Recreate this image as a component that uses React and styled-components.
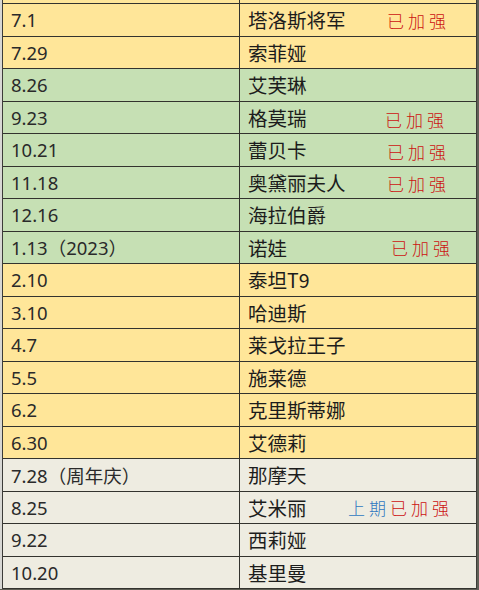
import React from "react";
import styled, { createGlobalStyle } from "styled-components";

const Global = createGlobalStyle`
  html, body { margin: 0; padding: 0; }
  body {
    background: #5f5f55;
    width: 479px;
    height: 590px;
    overflow: hidden;
    font-family: "Noto Sans", "Noto Sans CJK SC", sans-serif;
  }
`;

const Sheet = styled.div`
  width: 475px;
  height: 589px;
  box-sizing: border-box;
  border-left: 1px solid #3c3c38;
  border-right: 1px solid #3c3c38;
  margin-left: 2px;
  background: #eeece1;
  box-shadow: -2px 0 0 #d8d8d4;
`;

const bg = {
  y: "#ffe699",
  g: "#c6e0b4",
  e: "#eeece1",
};

const Stub = styled.div`
  height: 3px;
  background: ${bg.y};
  border-bottom: 1px solid #33332e;
  display: grid;
  grid-template-columns: 237px 1fr;
  & > div:first-child { border-right: 1px solid #33332e; }
`;

const Row = styled.div`
  display: grid;
  grid-template-columns: 237px 1fr;
  height: 32.5px;
  box-sizing: border-box;
  border-bottom: 1px solid #33332e;
  background: ${(p) => bg[p.$tone]};
`;

const DateCell = styled.div`
  display: flex;
  align-items: center;
  padding-left: 8px;
  border-right: 1px solid #33332e;
  font-size: 18.5px;
  font-weight: 400;
  color: #2a2a2a;
  white-space: nowrap;
`;

const NameCell = styled.div`
  position: relative;
  display: flex;
  align-items: center;
  padding-left: 8px;
  font-family: "Noto Sans CJK SC", sans-serif;
  font-size: 19.5px;
  color: #1c1c1c;
  white-space: nowrap;
`;

const Note = styled.span`
  position: absolute;
  left: ${(p) => p.$x}px;
  top: 50%;
  transform: translateY(calc(-50% + ${(p) => p.$dy || 0}px));
  font-family: "Noto Sans CJK SC", sans-serif;
  font-weight: 300;
  font-size: 17px;
  letter-spacing: 4px;
  white-space: nowrap;
`;

const Red = styled.span`
  color: #cc1111;
`;

const Blue = styled.span`
  color: #2f78c0;
`;

const rows = [
  ["7.1", "塔洛斯将军", "y", { x: 147 }],
  ["7.29", "索菲娅", "y"],
  ["8.26", "艾芙琳", "g"],
  ["9.23", "格莫瑞", "g", { x: 145, dy: 2 }],
  ["10.21", "蕾贝卡", "g", { x: 147, dy: 1 }],
  ["11.18", "奥黛丽夫人", "g", { x: 147, dy: 1 }],
  ["12.16", "海拉伯爵", "g"],
  ["1.13（2023）", "诺娃", "g", { x: 151 }],
  ["2.10", "泰坦T9", "y"],
  ["3.10", "哈迪斯", "y"],
  ["4.7", "莱戈拉王子", "y"],
  ["5.5", "施莱德", "y"],
  ["6.2", "克里斯蒂娜", "y"],
  ["6.30", "艾德莉", "y"],
  ["7.28（周年庆）", "那摩天", "e"],
  ["8.25", "艾米丽", "e", { x: 108, prev: true }],
  ["9.22", "西莉娅", "e"],
  ["10.20", "基里曼", "e"],
];

export default function App() {
  return (
    <>
      <Global />
      <Sheet>
        <Stub>
          <div />
          <div />
        </Stub>
        {rows.map(([date, name, tone, note]) => (
          <Row key={date} $tone={tone}>
            <DateCell>{date}</DateCell>
            <NameCell>
              {name}
              {note && (
                <Note $x={note.x} $dy={note.dy}>
                  {note.prev && <Blue>上期</Blue>}
                  <Red>已加强</Red>
                </Note>
              )}
            </NameCell>
          </Row>
        ))}
      </Sheet>
    </>
  );
}
